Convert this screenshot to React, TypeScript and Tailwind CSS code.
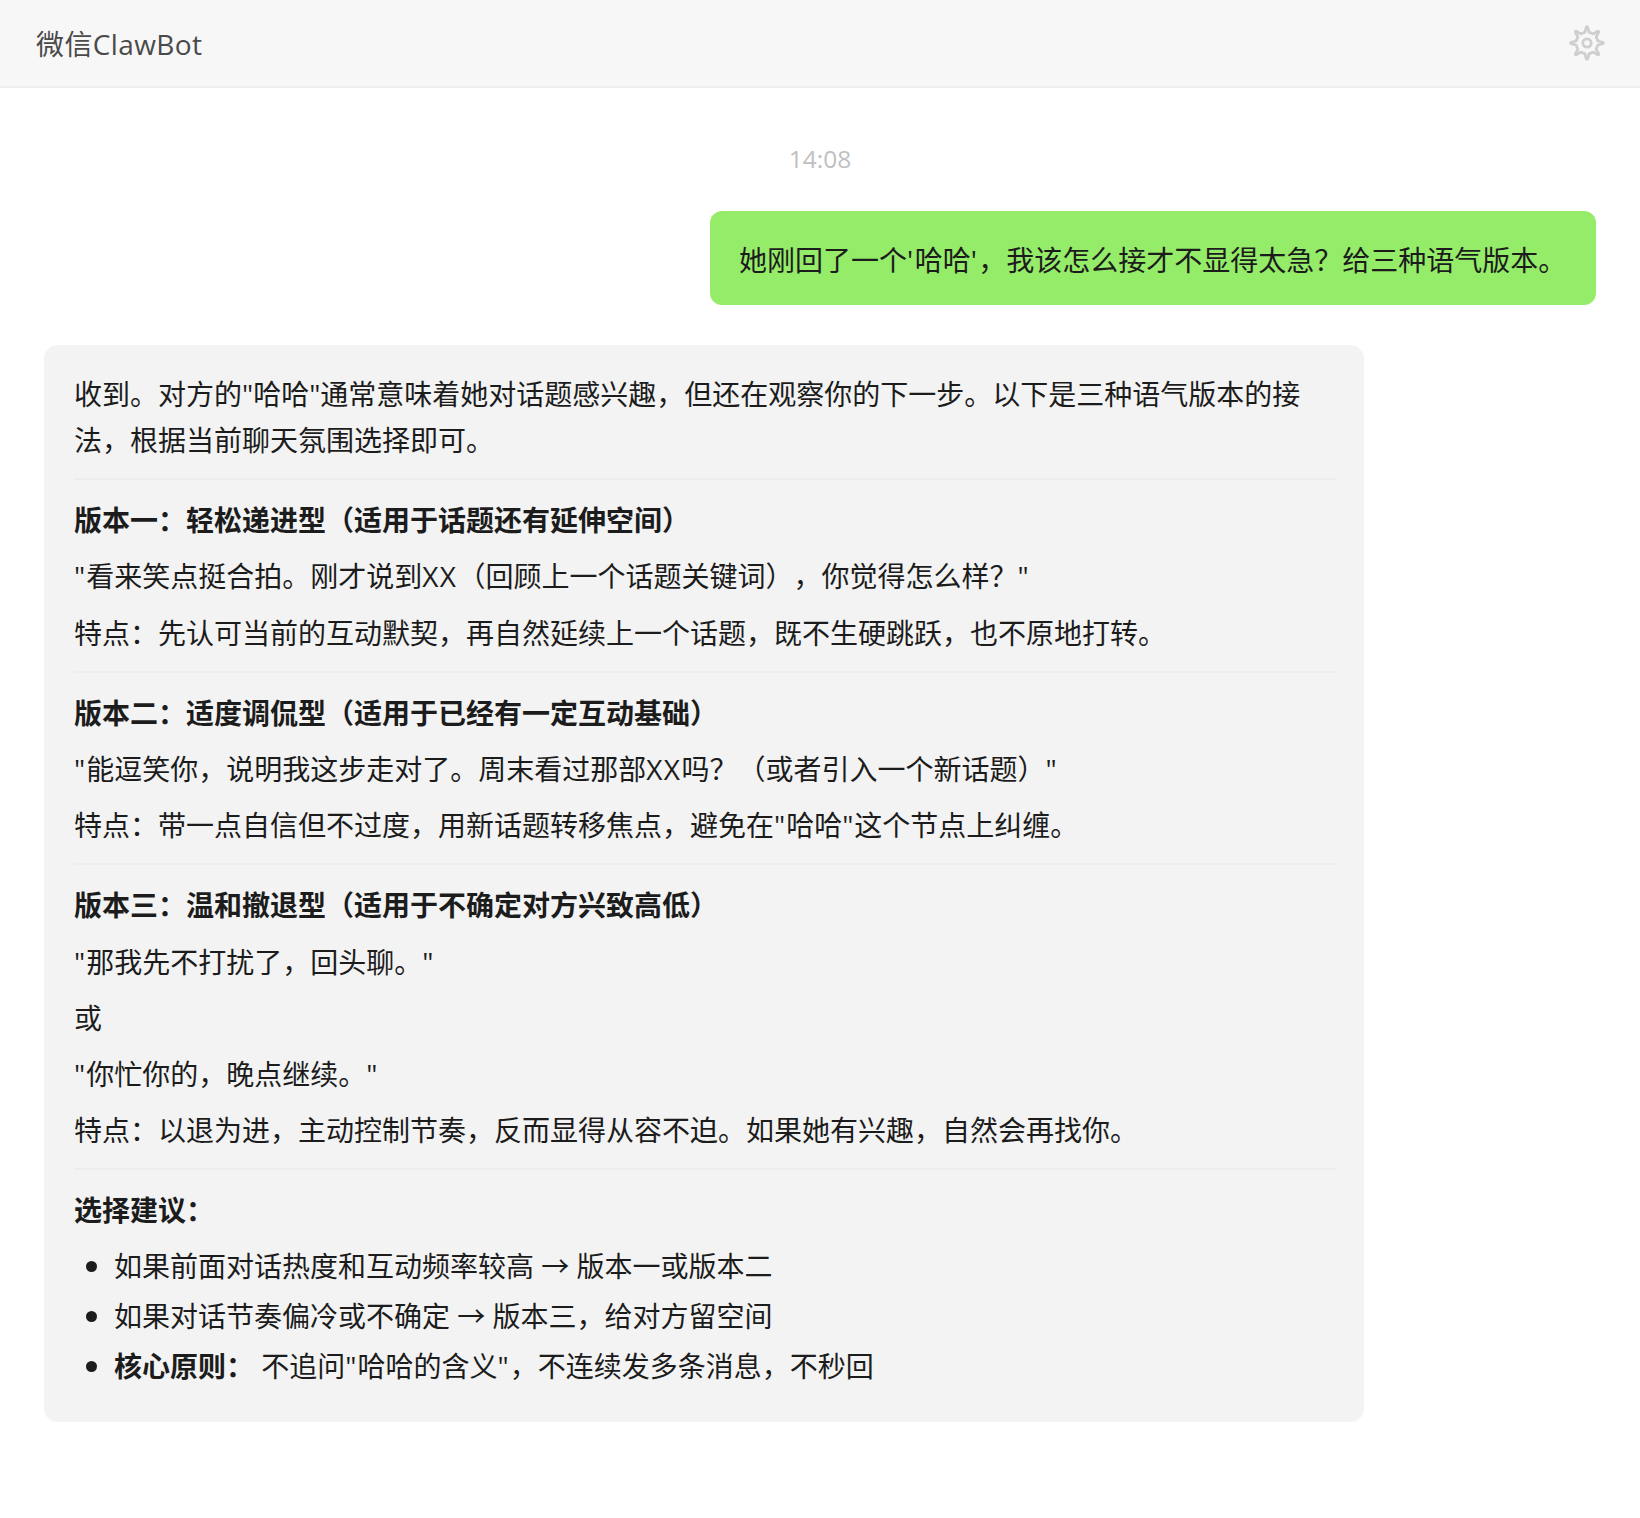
import React from "react";

const font = "font-['Segoe_UI','Open_Sans','Noto_Sans','Noto_Sans_CJK_SC',sans-serif]";

const gearPath = (() => {
  const pts: string[] = [];
  const n = 160;
  for (let i = 0; i < n; i++) {
    const t = (i / n) * Math.PI * 2;
    const phase = 8 * t + 1.1 * Math.sin(8 * t);
    const r = 13.6 + 2.8 * Math.cos(phase);
    const x = 18 + r * Math.cos(t);
    const y = 18 - r * Math.sin(t);
    pts.push(x.toFixed(2) + " " + y.toFixed(2));
  }
  return "M" + pts.join("L") + "Z";
})();

function Gear() {
  return (
    <svg width="36" height="36" viewBox="0 0 36 36" fill="none" stroke="#cfcfcf" strokeWidth="2.8" strokeLinejoin="round">
      <path d={gearPath} />
      <circle cx="18" cy="18" r="4.2" />
    </svg>
  );
}

function Rule() {
  return <hr className="mb-[17px] mt-[15px] border-0 border-t-2 border-[#ededed]" />;
}

function T({ s }: { s: string }) {
  const parts = s.split(/(["']|XX)/);
  return (
    <>
      {parts.map((p, i) =>
        p === '"' ? (
          <span key={i} className="tracking-[1px]">{p}</span>
        ) : p === "'" ? (
          <span key={i} className="tracking-[1.5px]">{p}</span>
        ) : p === "XX" ? (
          <span key={i} className="tracking-[1.5px]">{p}</span>
        ) : (
          p
        )
      )}
    </>
  );
}

function P({ s, className = "mb-[10px]" }: { s: string; className?: string }) {
  return <p className={className}><T s={s} /></p>;
}

export default function App() {
  return (
    <div className={"min-h-[1518px] bg-white text-[28px] leading-[46.2px] text-[#1c1c1c] [text-spacing-trim:space-all] " + font}>
      <header className="flex h-[88px] items-center justify-between border-b-2 border-[#ededed] bg-[#f7f7f7] pl-[36px] pr-[35px]">
        <h1 className="pt-[3px] text-[28px] font-normal tracking-[0.4px] text-[#4a4a4a]">微信ClawBot</h1>
        <Gear />
      </header>
      <main className="flex flex-col px-[44px]">
        <div className="mt-[49px] text-center text-[24.5px] leading-[44px] text-[#bfbfbf]">14:08</div>
        <div className="mt-[30px] flex justify-end">
          <div className="w-[886px] rounded-[12px] bg-[#95ec69] pb-[22px] pl-[29px] pr-[29px] pt-[26px]">
            <T s="她刚回了一个'哈哈'，我该怎么接才不显得太急？给三种语气版本。" />
          </div>
        </div>
        <div className="mt-[40px] w-[1320px] rounded-[14px] bg-[#f3f3f3] pb-[31px] pl-[30px] pr-[28px] pt-[25.5px]">
          <p>收到。对方的"哈哈"通常意味着她对话题感兴趣，但还在观察你的下一步。以下是三种语气版本的接法，根据当前聊天氛围选择即可。</p>
          <Rule />
          <P className="mb-[10px] font-bold" s="版本一：轻松递进型（适用于话题还有延伸空间）" />
          <P s={'"看来笑点挺合拍。刚才说到XX（回顾上一个话题关键词），你觉得怎么样？"'} />
          <P className="" s="特点：先认可当前的互动默契，再自然延续上一个话题，既不生硬跳跃，也不原地打转。" />
          <Rule />
          <P className="mb-[10px] font-bold" s="版本二：适度调侃型（适用于已经有一定互动基础）" />
          <P s={'"能逗笑你，说明我这步走对了。周末看过那部XX吗？（或者引入一个新话题）"'} />
          <P className="" s={'特点：带一点自信但不过度，用新话题转移焦点，避免在"哈哈"这个节点上纠缠。'} />
          <Rule />
          <P className="mb-[10px] font-bold" s="版本三：温和撤退型（适用于不确定对方兴致高低）" />
          <P s={'"那我先不打扰了，回头聊。"'} />
          <P s="或" />
          <P s={'"你忙你的，晚点继续。"'} />
          <P className="" s="特点：以退为进，主动控制节奏，反而显得从容不迫。如果她有兴趣，自然会再找你。" />
          <Rule />
          <p className="mb-[7px] font-bold">选择建议：</p>
          <ul className="list-disc pl-[40px] leading-[49px] marker:text-[30px]">
            <li>如果前面对话热度和互动频率较高 → 版本一或版本二</li>
            <li>如果对话节奏偏冷或不确定 → 版本三，给对方留空间</li>
            <li><b>核心原则：</b> <T s={'不追问"哈哈的含义"，不连续发多条消息，不秒回'} /></li>
          </ul>
        </div>
      </main>
    </div>
  );
}
